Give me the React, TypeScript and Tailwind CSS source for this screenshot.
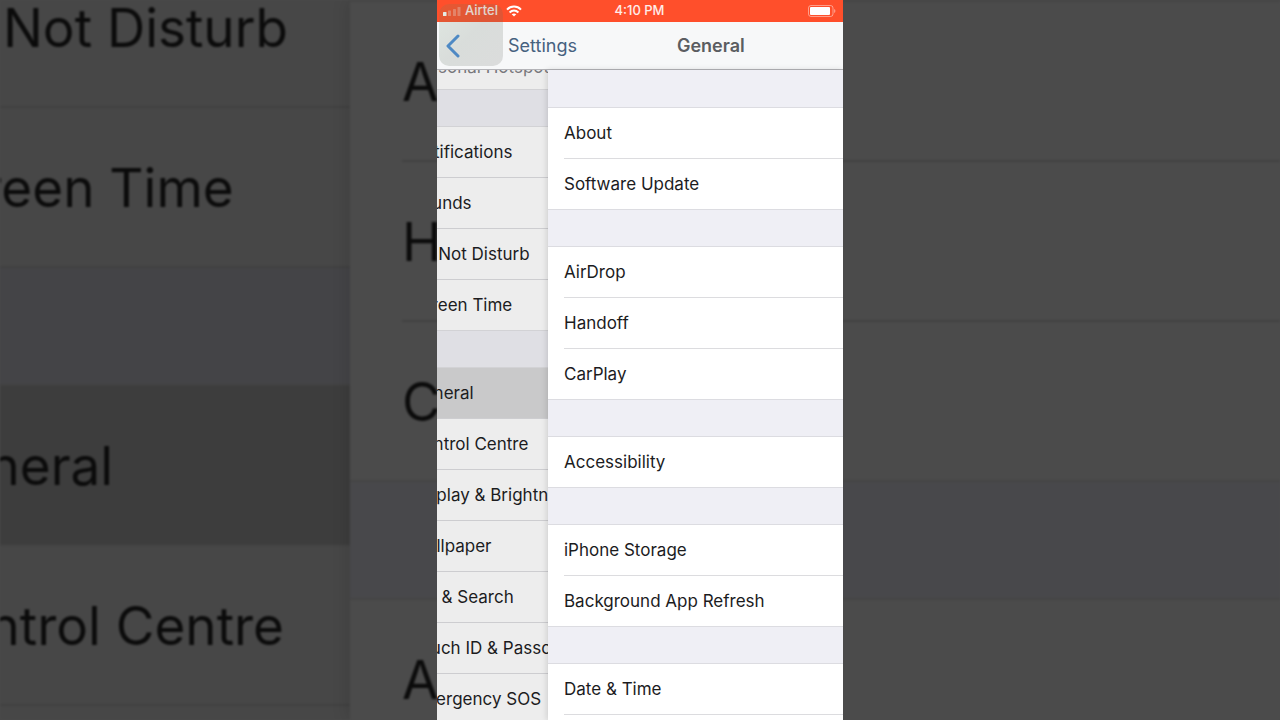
import { cva } from "class-variance-authority";
import { clsx } from "clsx";

type Scale = "phone" | "backdrop";
type Pane = "back" | "front";

const SETTINGS_GROUPS = [
  ["Personal Hotspot"],
  ["Notifications", "Sounds", "Do Not Disturb", "Screen Time"],
  [
    "General",
    "Control Centre",
    "Display & Brightness",
    "Wallpaper",
    "Siri & Search",
    "Touch ID & Passcode",
    "Emergency SOS",
  ],
];

const GENERAL_GROUPS = [
  ["About", "Software Update"],
  ["AirDrop", "Handoff", "CarPlay"],
  ["Accessibility"],
  ["iPhone Storage", "Background App Refresh"],
  ["Date & Time", "Keyboard"],
];

const list = cva("flex flex-col", {
  variants: {
    scale: { phone: "gap-[38px]", backdrop: "gap-[120px]" },
  },
});

const group = cva("shrink-0", {
  variants: {
    scale: { phone: "", backdrop: "" },
    pane: { back: "", front: "" },
  },
  compoundVariants: [
    {
      scale: "phone",
      pane: "back",
      className: "bg-[#ededed] shadow-[0_0_0_1px_#d2d2d5]",
    },
    {
      scale: "phone",
      pane: "front",
      className: "bg-white shadow-[0_0_0_1px_#dcdce1]",
    },
    {
      scale: "backdrop",
      pane: "back",
      className: "bg-[#474747] shadow-[0_0_0_2px_#414141]",
    },
    {
      scale: "backdrop",
      pane: "front",
      className: "bg-[#4b4b4b] shadow-[0_0_0_2px_#454545]",
    },
  ],
});

const row = cva("flex w-full items-center text-left whitespace-nowrap", {
  variants: {
    scale: {
      phone: "pt-[2px] text-[17px]",
      backdrop: "pt-1 text-[53px] text-[#0b0b0b]",
    },
    last: { true: "", false: "" },
    pane: { back: "", front: "" },
  },
  compoundVariants: [
    { scale: "phone", last: true, className: "h-[50px]" },
    { scale: "phone", last: false, className: "h-[51px] border-b" },
    { scale: "phone", pane: "back", className: "border-[#cdcdd0]" },
    { scale: "phone", pane: "front", className: "border-[#dcdcdf]" },
    { scale: "backdrop", last: true, className: "h-[158px]" },
    {
      scale: "backdrop",
      last: false,
      className: "h-[160px] border-b-2 border-[#414141]",
    },
  ],
});

function SettingsList(props: {
  groups: string[][];
  scale: Scale;
  pane: Pane;
  selected?: string;
  disabled?: string;
  className?: string;
}) {
  const { scale, pane } = props;
  const phone = scale === "phone";

  return (
    <div className={clsx(list({ scale }), props.className)}>
      {props.groups.map((items) => (
        <ul key={items[0]} className={group({ scale, pane })}>
          {items.map((item, i) => (
            <li
              key={item}
              className={clsx(
                pane === "front" && (phone ? "pl-4" : "pl-[52px]"),
                item === props.selected &&
                  (phone ? "bg-[#c9c9ca]" : "bg-[#3d3d3d]"),
              )}
            >
              <button
                type="button"
                tabIndex={phone ? 0 : -1}
                disabled={item === props.disabled}
                className={clsx(
                  row({ scale, pane, last: i === items.length - 1 }),
                  phone && "text-[#1c1c1e] disabled:pt-2 disabled:text-[#77777b]",
                )}
              >
                {item}
              </button>
            </li>
          ))}
        </ul>
      ))}
    </div>
  );
}

function Backdrop() {
  return (
    <div
      aria-hidden="true"
      className="col-start-1 row-start-1 flex min-h-0 overflow-hidden blur-[1px]"
    >
      <div className="w-[350px] shrink-0 overflow-hidden bg-[#444447]">
        <SettingsList
          scale="backdrop"
          pane="back"
          selected="General"
          groups={[["Do Not Disturb", "Screen Time"], SETTINGS_GROUPS[2]]}
          className="-mt-[52px] -ml-[82px]"
        />
      </div>
      <div className="z-10 flex-1 overflow-hidden bg-[#48484b] pt-[2px] shadow-[-2px_0_16px_rgba(0,0,0,0.12)]">
        <SettingsList
          scale="backdrop"
          pane="front"
          groups={GENERAL_GROUPS.slice(1, 3)}
        />
      </div>
    </div>
  );
}

function SignalIcon() {
  return (
    <svg viewBox="0 0 18 9" className="h-[9px] w-[18px]" fill="white">
      <rect x="0" y="5" width="3.5" height="4" rx="0.6" />
      <rect x="5" y="3.5" width="3" height="5.5" rx="0.6" opacity="0.3" />
      <rect x="10" y="2" width="3" height="7" rx="0.6" opacity="0.3" />
      <rect x="14.5" y="0" width="3" height="9" rx="0.6" opacity="0.3" />
    </svg>
  );
}

function WifiIcon() {
  return (
    <svg
      viewBox="0 0 16 12"
      className="h-3 w-4"
      fill="none"
      stroke="white"
      strokeWidth="2"
    >
      <path d="M1 4.6C5 .6 11 .6 15 4.6" />
      <path d="M3.6 7.4c2.6-2.4 6.2-2.4 8.8 0" />
      <path d="M8 11.6 5.7 9.3c1.4-1.2 3.2-1.2 4.6 0z" fill="white" stroke="none" />
    </svg>
  );
}

function BatteryIcon() {
  return (
    <svg viewBox="0 0 28 12" className="h-3 w-7">
      <rect
        x="0.5"
        y="0.5"
        width="24.5"
        height="11"
        rx="2.5"
        fill="none"
        stroke="white"
        strokeOpacity="0.45"
      />
      <rect x="2" y="2" width="20" height="8" rx="1" fill="white" />
      <path d="M26.2 4c1.6.6 1.6 3.4 0 4z" fill="white" fillOpacity="0.5" />
    </svg>
  );
}

function StatusBar() {
  return (
    <div className="grid h-[22px] shrink-0 grid-cols-3 items-center bg-[#ff4f2b] pr-[7px] pl-[6px] text-[13px] font-medium text-white/90">
      <div className="flex items-center gap-1">
        <SignalIcon />
        <span>Airtel</span>
        <span className="pl-1">
          <WifiIcon />
        </span>
      </div>
      <time className="text-center">4:10 PM</time>
      <div className="flex justify-end">
        <BatteryIcon />
      </div>
    </div>
  );
}

function NavBar() {
  return (
    <nav className="flex h-12 shrink-0 items-center border-b border-[#b4b4b8] bg-[#f7f8f9] text-[18px]">
      <button
        type="button"
        className="flex items-center gap-12 pl-[9px] text-[#46617f]"
      >
        <svg
          viewBox="0 0 14 24"
          className="h-6 w-[14px]"
          fill="none"
          stroke="#4a8fdc"
          strokeWidth="3"
          strokeLinecap="round"
          strokeLinejoin="round"
        >
          <path d="M12 2 2 12l10 10" />
        </svg>
        Settings
      </button>
      <h1 className="ml-[100px] font-semibold text-[#5b5d61]">General</h1>
    </nav>
  );
}

function Phone() {
  return (
    <main className="relative z-10 col-start-1 row-start-1 flex min-h-0 w-[406px] flex-col justify-self-center overflow-hidden bg-white">
      <StatusBar />
      <NavBar />
      {/* floating AssistiveTouch button */}
      <div className="pointer-events-none absolute top-1 left-[2px] h-[62px] w-16 rounded-[10px] bg-linear-to-br from-[#5a8c5a]/15 via-[#607060]/20 to-[#6c6c68]/20" />
      <div className="flex min-h-0 flex-1">
        <div className="w-[111px] shrink-0 overflow-hidden bg-[#dfdfe4]">
          <SettingsList
            scale="phone"
            pane="back"
            selected="General"
            disabled="Personal Hotspot"
            groups={SETTINGS_GROUPS}
            className="-mt-[31px] -ml-[26px]"
          />
        </div>
        <div className="z-10 flex-1 overflow-hidden bg-[#efeff5] pt-[38px] shadow-[-1px_0_6px_rgba(0,0,0,0.14)]">
          <SettingsList scale="phone" pane="front" groups={GENERAL_GROUPS} />
        </div>
      </div>
    </main>
  );
}

export default function App() {
  return (
    <div className="grid h-screen grid-cols-1 grid-rows-1 overflow-hidden bg-[#4b4b4b] font-['Inter','Liberation_Sans',sans-serif]">
      <Backdrop />
      <Phone />
    </div>
  );
}
